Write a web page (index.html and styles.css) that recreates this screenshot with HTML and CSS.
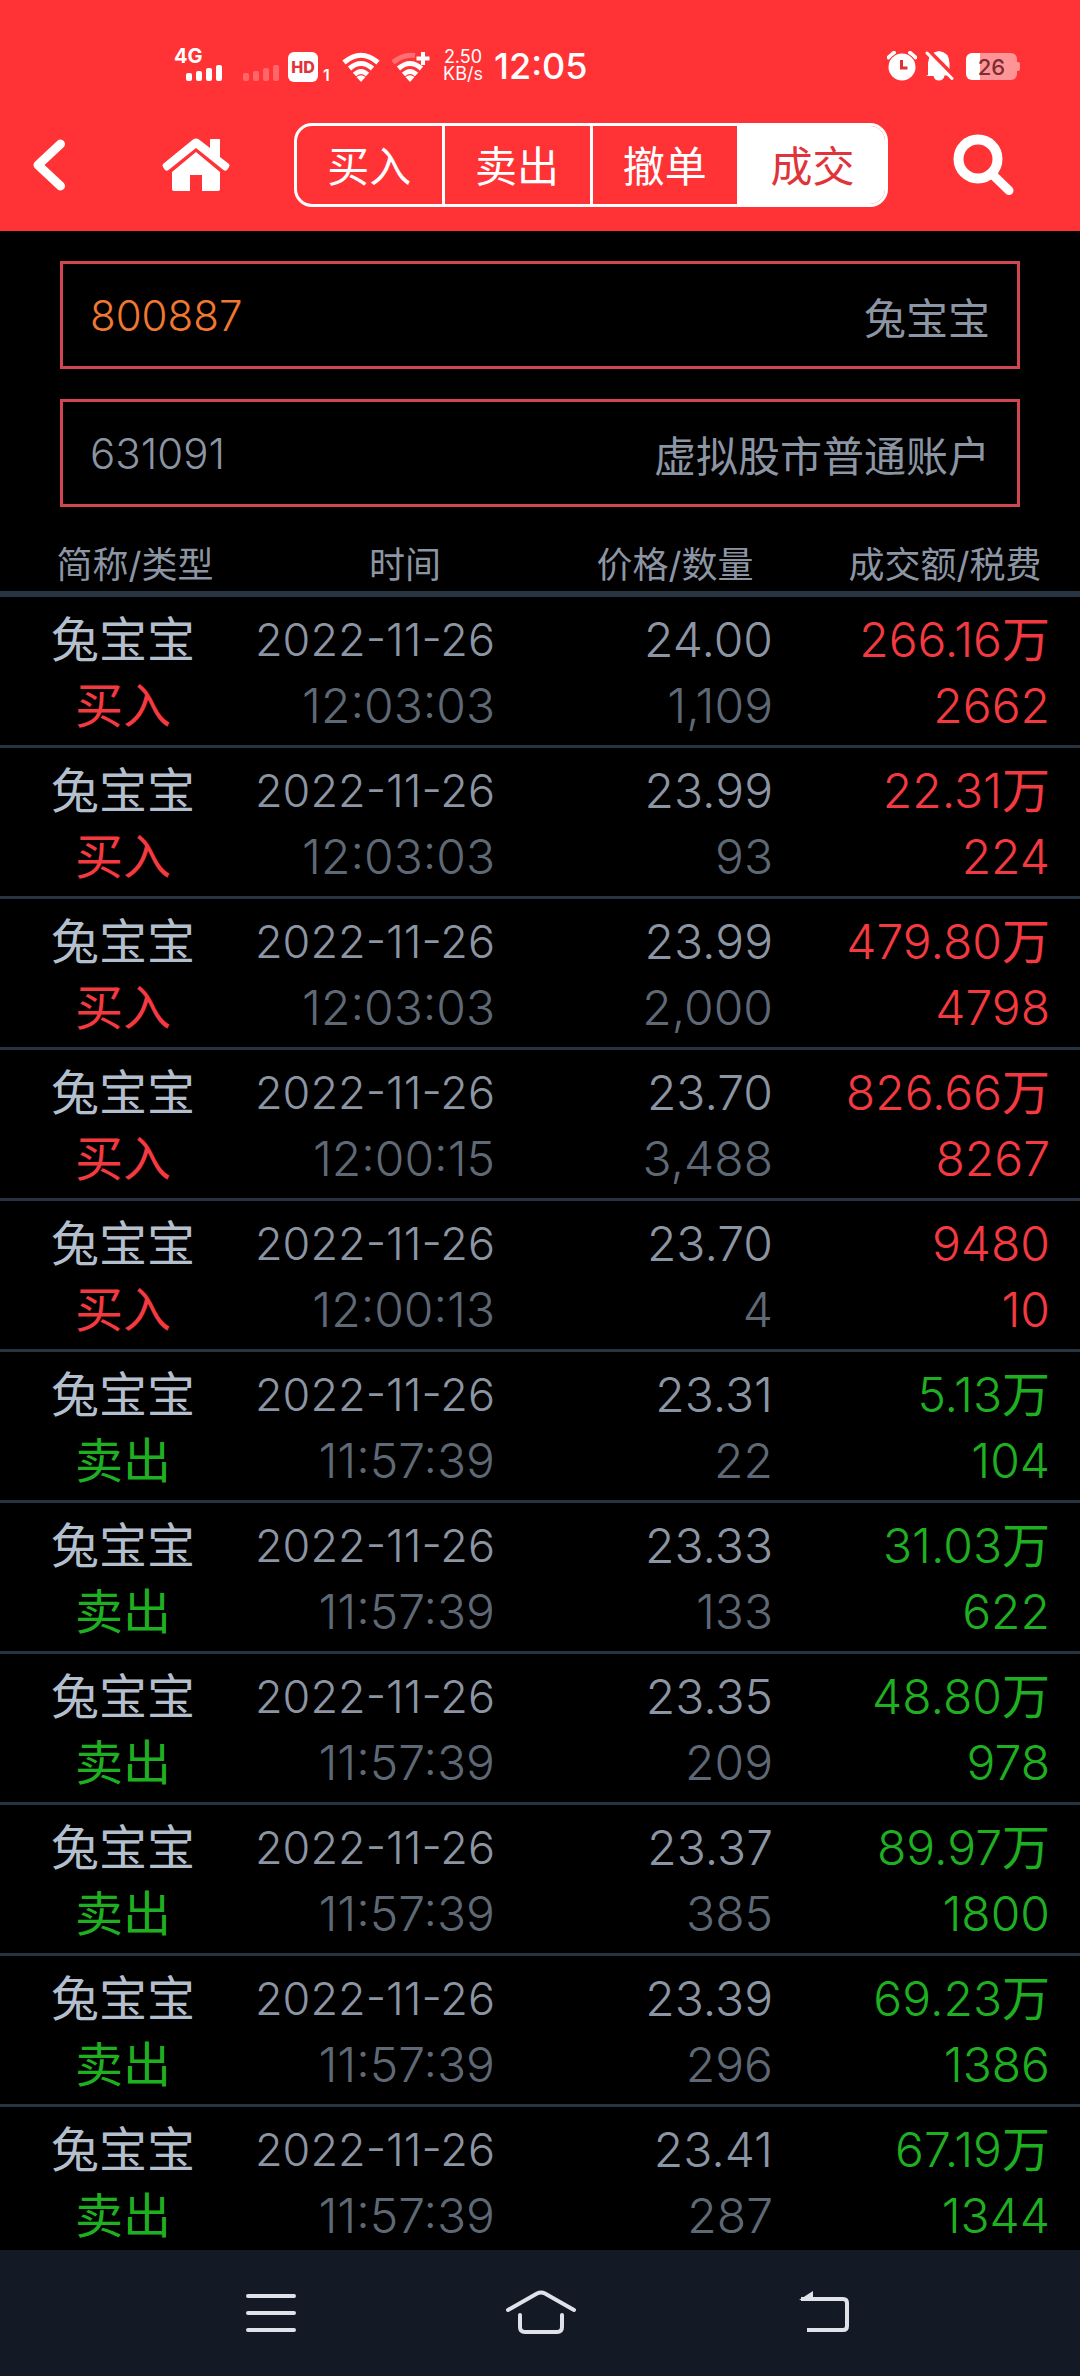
FILE: index.html
```html
<!DOCTYPE html>
<html lang="zh-CN">
<head>
<meta charset="utf-8">
<meta name="viewport" content="width=device-width, initial-scale=1">
<title>成交</title>
<link rel="stylesheet" href="styles.css">
</head>
<body>
<header class="top">
  <div class="status">
    <div class="status-left">
      <div class="signal">
        <span class="net">4G</span>
        <svg class="bars" width="36" height="16" viewBox="0 0 36 16"><rect x="0" y="8" width="6" height="8" rx="2"/><rect x="10" y="6" width="6" height="10" rx="2"/><rect x="20" y="3" width="6" height="13" rx="2"/><rect x="30" y="0" width="6" height="16" rx="2"/></svg>
      </div>
      <svg class="bars bars-off" width="36" height="16" viewBox="0 0 36 16"><rect x="0" y="8" width="6" height="8" rx="2"/><rect x="10" y="6" width="6" height="10" rx="2"/><rect x="20" y="3" width="6" height="13" rx="2"/><rect x="30" y="0" width="6" height="16" rx="2"/></svg>
      <div class="hd"><span class="hd-box">HD</span><span class="hd-sim">1</span></div>
      <svg class="wifi" width="38" height="30" viewBox="0 0 38 30"><g fill="none" stroke="#fff" stroke-width="5"><path d="M2 10.500Q19-4 36 10.500"/><path d="M7.500 16.500Q19 6.500 30.500 16.500"/><path d="M12.500 22.500Q19 16.500 25.500 22.500"/></g><path fill="#fff" d="M14.500 25Q19 21.500 23.500 25L19 30z"/></svg>
      <svg class="wifi" width="38" height="30" viewBox="0 0 38 30"><g fill="none" stroke="#fff" stroke-width="5"><path stroke-opacity=".3" d="M1 10.500Q11 2 23 3.500"/><path d="M6.500 16.500Q18 6.500 29.500 16.500"/><path d="M11.500 22.500Q18 16.500 24.500 22.500"/><path stroke-width="4" d="M31 0v13M24.500 6.500h13"/></g><path fill="#fff" d="M13.500 25Q18 21.500 22.500 25L18 30z"/></svg>
      <div class="speed"><span>2.50</span><span>KB/s</span></div>
      <time class="clock">12:05</time>
    </div>
    <div class="status-right">
      <svg width="30" height="30" viewBox="0 0 30 30"><path d="M1.500 6.500L7 1.800M28.500 6.500L23 1.800" stroke="#fff" stroke-width="4" stroke-linecap="round"/><circle cx="15" cy="16" r="14.500" fill="#ff3236"/><circle cx="15" cy="16" r="13.500" fill="#fff"/><path d="M14.500 9v8h6" fill="none" stroke="#dd3338" stroke-width="3"/></svg>
      <svg width="30" height="30" viewBox="0 0 30 30"><path fill="#fff" d="M3 24V12Q4 1 14 0Q24 1 24.500 12v8l2 4.500H19.500q-1 5-5.500 5T8.500 25H1z"/><path d="M5 1L30 26" stroke="#ff3236" stroke-width="4"/><path d="M2 2L27 27.500" stroke="#fff" stroke-width="3" stroke-linecap="round"/></svg>
      <div class="battery">26</div>
    </div>
  </div>
  <div class="toolbar">
    <button class="tool tool-back" aria-label="返回"><svg width="34" height="54" viewBox="0 0 34 54"><path d="M28.500 6L6 27L28.500 48" fill="none" stroke="#fff" stroke-width="9" stroke-linecap="round" stroke-linejoin="round"/></svg></button>
    <button class="tool tool-home" aria-label="首页"><svg width="68" height="54" viewBox="0 0 68 54"><path fill="#fff" d="M34 14L58 34V51q0 2-2 2H40V37H28V53H12q-2 0-2-2V34z"/><path fill="#fff" d="M31 1.500q3-2 6 0L48 10V2q0-1 1-1h8q1 0 1 1v17l9 7q1 1.500 0 3l-2 3q-2 1.500-3.500 0L34 10L6.500 32Q5 33.500 3 32L1 29q-1-1.500 0-3z"/></svg></button>
    <nav class="tabs">
      <button class="tab">买入</button>
      <button class="tab">卖出</button>
      <button class="tab">撤单</button>
      <button class="tab tab-on">成交</button>
    </nav>
    <button class="tool tool-search" aria-label="搜索"><svg width="62" height="62" viewBox="0 0 62 62"><circle cx="25" cy="25" r="19.500" fill="none" stroke="#fff" stroke-width="10"/><path d="M40 41L56 56.500" stroke="#fff" stroke-width="9" stroke-linecap="round"/></svg></button>
  </div>
</header>
<main class="content">
  <form class="fields">
    <div class="field"><input class="field-input field-code" id="code" value="800887"><label class="field-label" for="code">兔宝宝</label></div>
    <div class="field"><input class="field-input" id="account" value="631091" readonly><label class="field-label" for="account">虚拟股市普通账户</label></div>
  </form>
  <table class="deals">
    <thead><tr><th>简称/类型</th><th>时间</th><th>价格/数量</th><th>成交额/税费</th></tr></thead>
    <tbody>
      <tr class="buy"><td><b>兔宝宝</b><i>买入</i></td><td><b>2022-11-26</b><i>12:03:03</i></td><td><b>24.00</b><i>1,109</i></td><td><b>266.16<span class="unit">万</span></b><i>2662</i></td></tr>
      <tr class="buy"><td><b>兔宝宝</b><i>买入</i></td><td><b>2022-11-26</b><i>12:03:03</i></td><td><b>23.99</b><i>93</i></td><td><b>22.31<span class="unit">万</span></b><i>224</i></td></tr>
      <tr class="buy"><td><b>兔宝宝</b><i>买入</i></td><td><b>2022-11-26</b><i>12:03:03</i></td><td><b>23.99</b><i>2,000</i></td><td><b>479.80<span class="unit">万</span></b><i>4798</i></td></tr>
      <tr class="buy"><td><b>兔宝宝</b><i>买入</i></td><td><b>2022-11-26</b><i>12:00:15</i></td><td><b>23.70</b><i>3,488</i></td><td><b>826.66<span class="unit">万</span></b><i>8267</i></td></tr>
      <tr class="buy"><td><b>兔宝宝</b><i>买入</i></td><td><b>2022-11-26</b><i>12:00:13</i></td><td><b>23.70</b><i>4</i></td><td><b>9480</b><i>10</i></td></tr>
      <tr class="sell"><td><b>兔宝宝</b><i>卖出</i></td><td><b>2022-11-26</b><i>11:57:39</i></td><td><b>23.31</b><i>22</i></td><td><b>5.13<span class="unit">万</span></b><i>104</i></td></tr>
      <tr class="sell"><td><b>兔宝宝</b><i>卖出</i></td><td><b>2022-11-26</b><i>11:57:39</i></td><td><b>23.33</b><i>133</i></td><td><b>31.03<span class="unit">万</span></b><i>622</i></td></tr>
      <tr class="sell"><td><b>兔宝宝</b><i>卖出</i></td><td><b>2022-11-26</b><i>11:57:39</i></td><td><b>23.35</b><i>209</i></td><td><b>48.80<span class="unit">万</span></b><i>978</i></td></tr>
      <tr class="sell"><td><b>兔宝宝</b><i>卖出</i></td><td><b>2022-11-26</b><i>11:57:39</i></td><td><b>23.37</b><i>385</i></td><td><b>89.97<span class="unit">万</span></b><i>1800</i></td></tr>
      <tr class="sell"><td><b>兔宝宝</b><i>卖出</i></td><td><b>2022-11-26</b><i>11:57:39</i></td><td><b>23.39</b><i>296</i></td><td><b>69.23<span class="unit">万</span></b><i>1386</i></td></tr>
      <tr class="sell"><td><b>兔宝宝</b><i>卖出</i></td><td><b>2022-11-26</b><i>11:57:39</i></td><td><b>23.41</b><i>287</i></td><td><b>67.19<span class="unit">万</span></b><i>1344</i></td></tr>
    </tbody>
  </table>
</main>
<nav class="system">
  <button class="sys" aria-label="最近任务"><svg width="52" height="46" viewBox="0 0 52 46"><path d="M3 6h46M3 23h46M3 40h46" stroke="#dfe2e8" stroke-width="4" stroke-linecap="round"/></svg></button>
  <button class="sys" aria-label="主屏幕"><svg width="72" height="46" viewBox="0 0 72 46"><path d="M3 20L32 3.500q4-2 8 0L69 20M15 25v12q0 5 5 5h32q5 0 5-5V25" fill="none" stroke="#dfe2e8" stroke-width="4" stroke-linecap="round"/></svg></button>
  <button class="sys" aria-label="返回上一级"><svg width="52" height="46" viewBox="0 0 52 46"><path d="M3 9h42q4 0 4 4v23q0 4-4 4H9" fill="none" stroke="#dfe2e8" stroke-width="4"/><path fill="#dfe2e8" d="M15 1v9H1z"/></svg></button>
</nav>
</body>
</html>
```
FILE: styles.css
```css
* { box-sizing: border-box; }

body {
  margin: 0;
  height: 100vh;
  display: flex;
  flex-direction: column;
  background: #000;
  color: #8c95a3;
  font-family: Inter, "Noto Sans CJK SC", sans-serif;
  font-weight: 300;
}

button, input {
  margin: 0;
  padding: 0;
  border: 0;
  background: none;
  color: inherit;
  font: inherit;
}

.top { flex: none; background: #ff3236; color: #fff; }

/* Status bar */
.status {
  display: flex;
  justify-content: space-between;
  align-items: center;
  height: 99px;
  padding: 33px 60px 0 174px;
}
.status-left { display: flex; align-items: flex-end; height: 32px; }
.signal { display: flex; flex-direction: column; width: 48px; margin-right: 21px; }
.net { font-size: 20px; line-height: 14px; font-weight: 700; }
.bars { fill: #fff; margin: 2px 0 1px; }
.signal .bars { align-self: flex-end; }
.bars-off { opacity: .25; }
.hd { display: flex; align-items: flex-end; gap: 5px; margin-left: 9px; width: 54px; }
.hd-box {
  width: 30px;
  height: 30px;
  border-radius: 6px;
  background: #fff;
  color: #e0343a;
  font-size: 16px;
  line-height: 30px;
  font-weight: 800;
  text-align: center;
}
.hd-sim { font-size: 16px; line-height: 14px; font-weight: 600; }
.wifi { margin-right: 12px; }
.speed {
  display: flex;
  flex-direction: column;
  width: 42px;
  font-size: 18px;
  line-height: 17px;
  font-weight: 400;
  text-align: center;
}
.clock { margin-left: 10px; font-size: 36px; line-height: 32px; font-weight: 500; }
.status-right { display: flex; align-items: center; gap: 8px; }
.battery {
  position: relative;
  width: 51px;
  height: 27px;
  margin: 0 3px;
  border-radius: 6px;
  background: linear-gradient(90deg, #fff 27%, #ff9497 27%);
  color: #7c2c33;
  font-size: 22px;
  line-height: 28px;
  font-weight: 500;
  text-align: center;
}
.battery::after {
  content: "";
  position: absolute;
  top: 9px;
  right: -3px;
  width: 3px;
  height: 9px;
  border-radius: 0 2px 2px 0;
  background: #ff9497;
}

/* Toolbar */
.toolbar { display: flex; align-items: center; height: 132px; }
.tool { display: flex; align-items: center; justify-content: center; height: 100%; }
.tool-back { width: 98px; }
.tool-home { width: 196px; }
.tool-search { width: 192px; }
.tabs {
  flex: 1;
  display: flex;
  height: 84px;
  border: 3px solid #fff;
  border-radius: 18px;
  overflow: hidden;
}
.tab { flex: 1; padding-top: 3px; font-size: 42px; line-height: 75px; font-weight: 400; }
.tab + .tab { border-left: 3px solid #fff; }
.tab-on { background: #fff; color: #e0343a; }

/* Stock and account */
.content { flex: 1; min-height: 0; overflow-y: auto; scrollbar-width: none; }
.fields { display: flex; flex-direction: column; gap: 30px; padding: 30px 60px; }
.field {
  display: flex;
  align-items: center;
  height: 108px;
  padding: 0 27px;
  border: 3px solid #d2474f;
  font-size: 42px;
}
.field-input { flex: 1; min-width: 0; height: 100%; outline: 0; }
.field-label { font-weight: 400; }
.field-code { color: #f07830; }

/* Deals */
.deals, .deals thead, .deals tbody { display: block; }
.deals tr { display: grid; }
.deals thead tr { grid-template-columns: repeat(4, 1fr); border-bottom: 6px solid #273543; }
.deals th { padding: 3px 0 0; font-size: 36px; line-height: 51px; font-weight: 400; text-align: center; }
.deals tbody tr {
  grid-template-columns: 246fr 249fr 278fr 307fr;
  height: 151px;
  padding-top: 10px;
  border-bottom: 3px solid #273340;
}
.deals td { padding: 0; text-align: right; font-size: 48px; line-height: 66px; white-space: nowrap; }
.deals b, .deals i { display: block; height: 66px; font-weight: inherit; font-style: normal; }
.deals td:first-child { text-align: center; color: #b4bfce; font-weight: 400; }
.deals td:nth-child(2) b { font-size: 45px; }
.deals td:last-child { padding-right: 30px; }
.deals i { color: #5f6976; }
.unit { font-weight: 400; }
.buy td:first-child i, .buy td:last-child, .buy td:last-child i { color: #f43a40; }
.sell td:first-child i, .sell td:last-child, .sell td:last-child i { color: #1fb022; }

/* System navigation */
.system {
  flex: none;
  display: grid;
  grid-template-columns: 270fr 270fr 296fr;
  height: 126px;
  padding: 0 108px 0 136px;
  background: #141a25;
}
.sys { display: flex; align-items: center; justify-content: center; }
```
